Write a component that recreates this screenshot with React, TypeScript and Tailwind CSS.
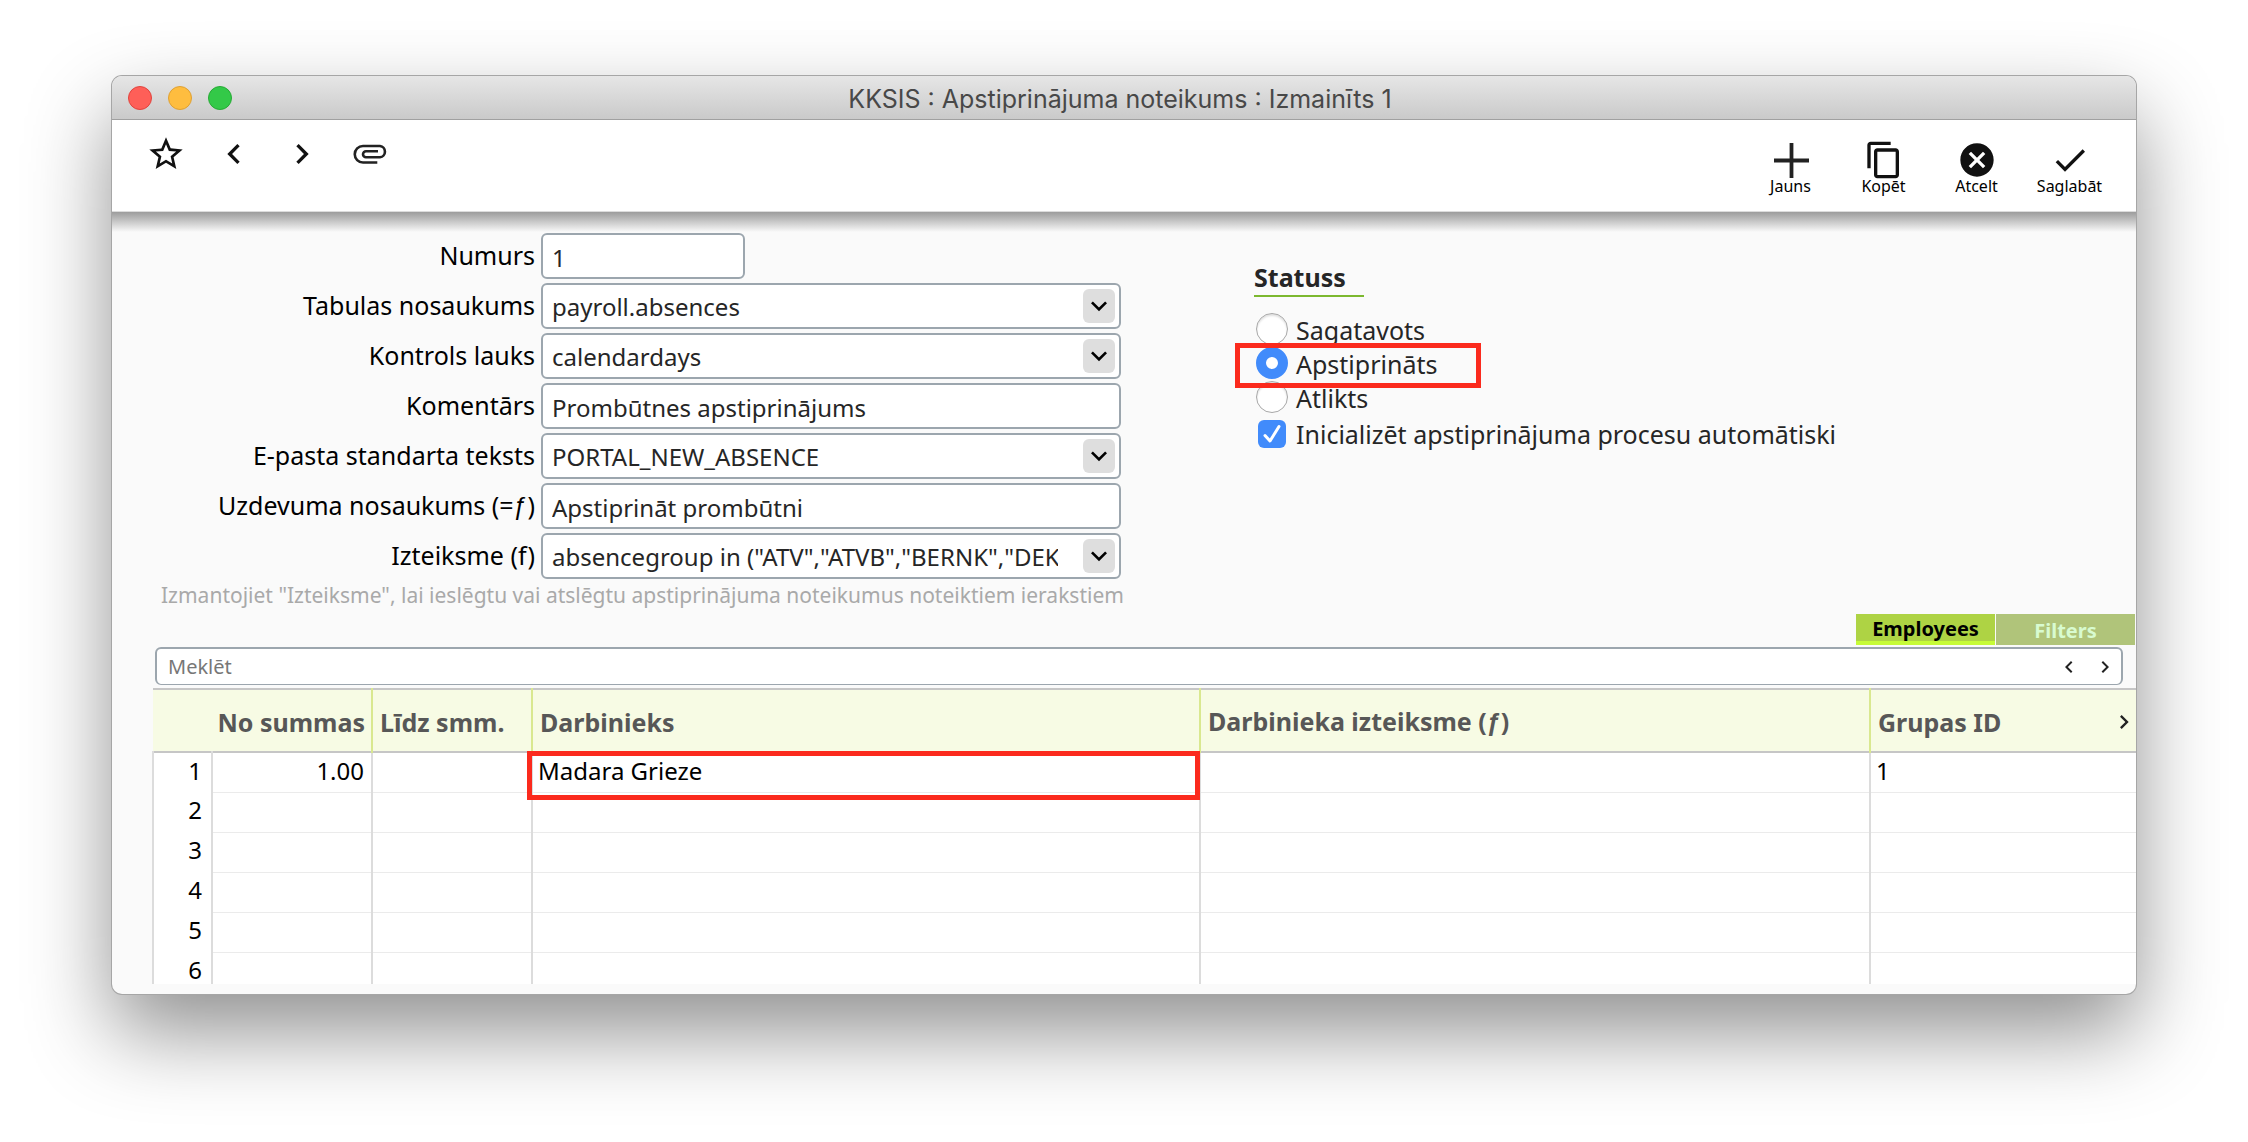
import React, { useState } from 'react';
import {
  MdCancel,
  MdCheck,
  MdChevronLeft,
  MdChevronRight,
  MdContentCopy,
  MdExpandMore,
  MdStarBorder,
} from 'react-icons/md';

interface Field {
  id: string;
  label: React.ReactNode;
  value: string;
  kind: 'short' | 'text' | 'select';
}

// the slanted function sign, which Noto Sans draws upright
const FnSign = () => <span className="font-['Liberation_Sans',sans-serif]">ƒ</span>;

const FIELDS: Field[] = [
  { id: 'number', label: 'Numurs', value: '1', kind: 'short' },
  { id: 'table', label: 'Tabulas nosaukums', value: 'payroll.absences', kind: 'select' },
  { id: 'control', label: 'Kontrols lauks', value: 'calendardays', kind: 'select' },
  { id: 'comment', label: 'Komentārs', value: 'Prombūtnes apstiprinājums', kind: 'text' },
  { id: 'email', label: 'E-pasta standarta teksts', value: 'PORTAL_NEW_ABSENCE', kind: 'select' },
  { id: 'task', label: <>Uzdevuma nosaukums (=<FnSign />)</>, value: 'Apstiprināt prombūtni', kind: 'text' },
  { id: 'expression', label: 'Izteiksme (f)', value: 'absencegroup in ("ATV","ATVB","BERNK","DEKR")', kind: 'select' },
];

const STATUSES = ['Sagatavots', 'Apstiprināts', 'Atlikts'];

const ROWS = [
  { id: 1, from: '1.00', to: '', employee: 'Madara Grieze', expression: '', group: '1' },
  { id: 2, from: '', to: '', employee: '', expression: '', group: '' },
  { id: 3, from: '', to: '', employee: '', expression: '', group: '' },
  { id: 4, from: '', to: '', employee: '', expression: '', group: '' },
  { id: 5, from: '', to: '', employee: '', expression: '', group: '' },
  { id: 6, from: '', to: '', employee: '', expression: '', group: '' },
];

const PlusIcon = () => (
  <svg viewBox="0 0 40 40" className="size-10" stroke="#222" strokeWidth="3.8">
    <path d="M20.500 3v35M3 20.500h35" />
  </svg>
);

const ClipIcon = () => (
  <svg viewBox="0 0 40 40" className="size-10" fill="none" stroke="#222" strokeWidth="2.6">
    <path d="M27.300 28.500H13a8.200 8.200 0 0 1 0-16.500h17a5.700 5.700 0 0 1 0 11.300H16a3 3 0 0 1 0-6h12" />
  </svg>
);

const TitleBar = () => (
  <header className="flex h-11 items-center border-b border-[#a0a0a0] bg-linear-to-b from-[#e6e6e6] to-[#cacaca] px-4">
    <div className="flex flex-1 gap-4">
      <button aria-label="Close" className="size-6 rounded-full border border-[#e0443e] bg-[#fe5f58]" />
      <button aria-label="Minimize" className="size-6 rounded-full border border-[#dea034] bg-[#febd3f]" />
      <button aria-label="Zoom" className="size-6 rounded-full border border-[#27aa35] bg-[#33c948]" />
    </div>
    <h1 className="pt-0.5 pr-2 font-['Inter',sans-serif] text-[25px] leading-8 text-[#484848]">
      KKSIS : Apstiprinājuma noteikums : Izmainīts 1
    </h1>
    <div className="flex-1" />
  </header>
);

const NAV_BUTTONS = [
  { label: 'Favorite', icon: MdStarBorder },
  { label: 'Previous', icon: MdChevronLeft },
  { label: 'Next', icon: MdChevronRight },
  { label: 'Attachments', icon: ClipIcon },
];

const ACTIONS = [
  { label: 'Jauns', icon: PlusIcon },
  { label: 'Kopēt', icon: MdContentCopy },
  { label: 'Atcelt', icon: MdCancel },
  { label: 'Saglabāt', icon: MdCheck },
];

const Toolbar = () => (
  <div className="relative flex items-start justify-between border-b border-[#dcdcdc] bg-white px-5">
    <div className="flex pt-3.5">
      {NAV_BUTTONS.map(item => (
        <button key={item.label} aria-label={item.label} className="flex w-[68px] justify-center">
          <item.icon className="size-10 text-[#111]" />
        </button>
      ))}
    </div>
    <div className="flex pt-5 pb-[19px]">
      {ACTIONS.map(item => (
        <button key={item.label} className="flex w-[93px] flex-col items-center text-base leading-3">
          <item.icon className="size-10 text-[#111]" />
          {item.label}
        </button>
      ))}
    </div>
    <div className="absolute inset-x-0 top-full mt-px h-5 bg-linear-to-b from-[#9c9c9c] to-[#fafafa]" />
  </div>
);

const FormRow: React.FC<{ field: Field }> = ({ field }) => {
  const box = 'h-[46px] rounded-md border-2 border-[#9ca6ae] bg-white pt-0.5 pl-[9px] text-[#262626]';
  return (
    <div className="flex items-start justify-end gap-1.5">
      <label htmlFor={field.id} className="pt-1 text-[25px] leading-9">{field.label}</label>
      <div className="relative w-[580px]">
        {field.kind === 'select' ? (
          <>
            <select id={field.id} className={`${box} w-full appearance-none pr-[61px]`}>
              <option>{field.value}</option>
            </select>
            <span className="pointer-events-none absolute top-1.5 right-1.5 flex h-[34px] w-8 items-center justify-center rounded-md bg-[#dedede]">
              <MdExpandMore className="size-8 text-black" />
            </span>
          </>
        ) : (
          <input
            id={field.id}
            defaultValue={field.value}
            className={`${box} pr-2.5 ${field.kind === 'short' ? 'w-[204px]' : 'w-full'}`}
          />
        )}
      </div>
    </div>
  );
};

const StatusPanel = () => {
  const [status, setStatus] = useState('Apstiprināts');
  return (
    <fieldset className="mt-7 text-[25px] text-[#262626]">
      <legend className="mb-[15px] w-[110px] border-b-2 border-[#7cb82f] pb-0.5 leading-8 font-bold">Statuss</legend>
      {STATUSES.map(item => (
        <label key={item} className="relative flex h-[34px] items-center gap-2 pl-0.5">
          <input
            type="radio"
            name="status"
            checked={status === item}
            onChange={() => setStatus(item)}
            className="size-8 appearance-none rounded-full border border-[#a8a8a8] bg-white shadow-[inset_0_2px_2px_rgba(0,0,0,0.12)] checked:border-[10px] checked:border-[#418bfb] checked:shadow-none"
          />
          <span className="pt-1">{item}</span>
          {item === 'Apstiprināts' && (
            <span className="pointer-events-none absolute -top-[3px] -left-[19px] z-10 h-[45px] w-[246px] border-[5px] border-[#fb2a1d]" />
          )}
        </label>
      ))}
      <label className="mt-0.5 flex h-9 items-center gap-2.5 pl-1">
        <span className="relative flex">
          <input type="checkbox" defaultChecked className="size-7 appearance-none rounded-md bg-white checked:bg-[#418bfb]" />
          <svg viewBox="0 0 28 28" className="pointer-events-none absolute inset-0" fill="none" stroke="#fff" strokeWidth="3">
            <path d="M7 15.500l5 5.500L21 6.500" strokeLinecap="round" strokeLinejoin="round" />
          </svg>
        </span>
        <span className="pt-0.5">Inicializēt apstiprinājuma procesu automātiski</span>
      </label>
    </fieldset>
  );
};

const EmployeeTable = () => (
  <table className="w-full table-fixed border-collapse text-left">
    <colgroup>
      <col className="w-[59px]" />
      <col className="w-40" />
      <col className="w-40" />
      <col className="w-[668px]" />
      <col className="w-[670px]" />
      <col />
    </colgroup>
    <thead>
      <tr className="h-[63px] border-y-2 border-[#c6c6c6] bg-[#f7fbe4] text-[25px] text-[#575757] [&>th]:pt-1">
        <th colSpan={2} className="pr-1.5 text-right">No summas</th>
        <th className="border-l-2 border-[#d9e88f] px-[7px]">Līdz smm.</th>
        <th className="border-l-2 border-[#d9e88f] px-[7px]">Darbinieks</th>
        <th className="border-l-2 border-[#d9e88f] px-[7px]">Darbinieka izteiksme (<FnSign />)</th>
        <th className="border-l-2 border-[#d9e88f] pl-[7px]">
          <div className="flex items-center justify-between">
            Grupas ID
            <button aria-label="More columns" className="-mr-0.5"><MdChevronRight className="size-7 text-[#222]" /></button>
          </div>
        </th>
      </tr>
    </thead>
    <tbody className="bg-white">
      {ROWS.map(row => (
        <tr key={row.id} className="h-10 align-top leading-9 last:h-8 last:leading-7 last:[&>td]:border-b-0 last:[&>td]:pt-1">
          <td className="border-l-2 border-[#dcdcdc] pr-[9px] text-right">{row.id}</td>
          <td className="border-b border-l-2 border-b-[#ebebeb] border-l-[#dcdcdc] pr-[7px] text-right">{row.from}</td>
          <td className="border-b border-l-2 border-b-[#ebebeb] border-l-[#dcdcdc] px-[7px]">{row.to}</td>
          <td className="relative border-b border-l-2 border-b-[#ebebeb] border-l-[#dcdcdc] px-[5px]">
            {row.employee}
            {row.employee && (
              <span className="pointer-events-none absolute -top-0.5 -right-px -left-1.5 h-[49px] border-[5px] border-[#fb2a1d]" />
            )}
          </td>
          <td className="border-b border-l-2 border-b-[#ebebeb] border-l-[#dcdcdc] px-[7px]">{row.expression}</td>
          <td className="border-b border-l-2 border-b-[#ebebeb] border-l-[#dcdcdc] px-[5px]">{row.group}</td>
        </tr>
      ))}
    </tbody>
  </table>
);

export default function App() {
  return (
    <div className="min-h-screen overflow-hidden bg-white px-28 pt-[76px] pb-[148px] font-['Noto_Sans','Liberation_Sans',sans-serif] text-2xl text-black">
      <main className="overflow-hidden rounded-[10px] bg-[#fafafa] pb-2.5 shadow-[0_0_0_1px_#a6a6a6,0_38px_84px_rgba(0,0,0,0.44)]">
        <TitleBar />
        <Toolbar />
        <div className="flex gap-[133px] pt-[21px]">
          <section className="flex w-1/2 max-w-[1009px] flex-col gap-1">
            {FIELDS.map(field => <FormRow key={field.id} field={field} />)}
            <p className="pl-[49px] text-[21px] leading-6 whitespace-nowrap text-[#a9a9a9]">
              Izmantojiet "Izteiksme", lai ieslēgtu vai atslēgtu apstiprinājuma noteikumus noteiktiem ierakstiem
            </p>
          </section>
          <StatusPanel />
        </div>
        <div className="mt-[7px] flex justify-end gap-px pr-px text-xl font-bold">
          <button className="h-[31px] w-[139px] border-b-4 border-[#c6fb38] bg-[#aed344] pt-0.5 leading-6">Employees</button>
          <button className="h-[31px] w-[139px] bg-[#b0c47a] pt-0.5 text-[#d8fbd0]">Filters</button>
        </div>
        <div className="mt-0.5 mr-[13px] mb-[3px] ml-[43px] flex h-[38px] items-center rounded-md border-2 border-b border-[#9ca6ae] bg-white">
          <input aria-label="Meklēt" placeholder="Meklēt" className="h-full flex-1 px-[11px] text-xl placeholder:text-[#777]" />
          <button aria-label="Previous match" className="flex w-10 justify-center"><MdChevronLeft className="size-6 text-[#222]" /></button>
          <button aria-label="Next match" className="flex w-8 justify-center"><MdChevronRight className="size-6 text-[#222]" /></button>
        </div>
        <div className="pl-10">
          <EmployeeTable />
        </div>
      </main>
    </div>
  );
}
